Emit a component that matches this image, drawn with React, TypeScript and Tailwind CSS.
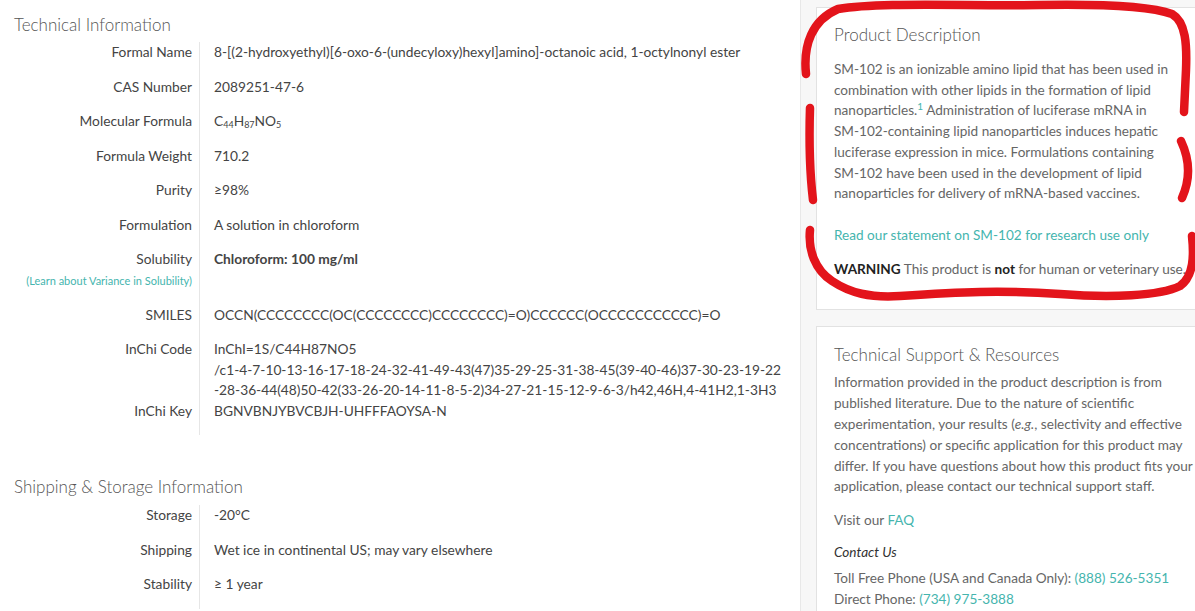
const teal = "text-[#45b5ae]";

const Row = ({
  label,
  children,
  extra,
  tight,
}: {
  label: string;
  children: React.ReactNode;
  extra?: React.ReactNode;
  tight?: boolean;
}) => (
  <div className="grid grid-cols-[199px_1fr]">
    <div className={`text-right pr-[7px] ${tight ? "" : "pb-[14px]"}`}>
      <div className="text-[#444]">{label}</div>
      {extra}
    </div>
    <div className={`border-l border-[#e6e6e6] pl-[14px] text-[#444] ${tight ? "" : "pb-[14px]"}`}>
      {children}
    </div>
  </div>
);

const TechnicalInfo = () => (
  <section>
    <h2 className="pl-[14px] pt-[13px] text-[17px] leading-[24px] font-light text-[#555]">
      Technical Information
    </h2>
    <div className="mt-[5px] text-[13.75px] leading-[20.5px]">
      <Row label="Formal Name">
        8-[(2-hydroxyethyl)[6-oxo-6-(undecyloxy)hexyl]amino]-octanoic acid, 1-octylnonyl ester
      </Row>
      <Row label="CAS Number">2089251-47-6</Row>
      <Row label="Molecular Formula">
        C<sub className="text-[9px]">44</sub>H<sub className="text-[9px]">87</sub>NO
        <sub className="text-[9px]">5</sub>
      </Row>
      <Row label="Formula Weight">710.2</Row>
      <Row label="Purity">≥98%</Row>
      <Row label="Formulation">A solution in chloroform</Row>
      <Row
        label="Solubility"
        extra={
          <div className={`text-[11px] leading-[21px] ${teal}`}>
            (Learn about Variance in Solubility)
          </div>
        }
      >
        <span className="font-bold">Chloroform: 100 mg/ml</span>
      </Row>
      <Row label="SMILES">
        OCCN(CCCCCCCC(OC(CCCCCCCC)CCCCCCCC)=O)CCCCCC(OCCCCCCCCCCC)=O
      </Row>
      <Row label="InChi Code" tight>
        <div className="whitespace-nowrap">InChI=1S/C44H87NO5</div>
        <div className="whitespace-nowrap">
          /c1-4-7-10-13-16-17-18-24-32-41-49-43(47)35-29-25-31-38-45(39-40-46)37-30-23-19-22
        </div>
        <div className="whitespace-nowrap">
          -28-36-44(48)50-42(33-26-20-14-11-8-5-2)34-27-21-15-12-9-6-3/h42,46H,4-41H2,1-3H3
        </div>
      </Row>
      <Row label="InChi Key">BGNVBNJYBVCBJH-UHFFFAOYSA-N</Row>
    </div>
  </section>
);

const ShippingInfo = () => (
  <section className="mt-[40px]">
    <h2 className="pl-[14px] text-[17px] leading-[24px] font-light text-[#555]">
      Shipping &amp; Storage Information
    </h2>
    <div className="mt-[6px] text-[13.75px] leading-[20.5px]">
      <Row label="Storage">-20°C</Row>
      <Row label="Shipping">Wet ice in continental US; may vary elsewhere</Row>
      <Row label="Stability">≥ 1 year</Row>
    </div>
  </section>
);

const Sidebar = () => (
  <aside className="w-[420px] shrink-0 bg-[#f7f7f7] border-l border-[#e8e8e8] pl-[15px] pt-[7px]">
    <div className="bg-white border border-[#e2e2e2] pl-[17px] pt-[15px] pb-[30px]">
      <h3 className="text-[17px] leading-[24px] font-light text-[#555]">Product Description</h3>
      <div className="w-[362px] mt-[12px] text-[13.6px] leading-[20.7px] text-[#666]">
        <p>
          <span className="whitespace-nowrap">SM-102</span> is an ionizable amino lipid that has
          been used in combination with other lipids in the formation of lipid nanoparticles.
          <sup className={`text-[10px] ${teal}`}>1</sup> Administration of luciferase mRNA in{" "}
          <span className="whitespace-nowrap">SM-102-containing</span> lipid nanoparticles
          induces hepatic luciferase expression in mice. Formulations containing{" "}
          <span className="whitespace-nowrap">SM-102</span> have been used in the development of
          lipid nanoparticles for delivery of mRNA-based vaccines.
        </p>
        <p className={`mt-[21px] ${teal}`}>Read our statement on SM-102 for research use only</p>
        <p className="mt-[13px] whitespace-nowrap">
          <span className="font-bold text-[#222]">WARNING</span> This product is{" "}
          <span className="font-bold text-[#222]">not</span> for human or veterinary use.
        </p>
      </div>
    </div>

    <div className="mt-[16px] bg-white border border-[#e2e2e2] pl-[17px] pt-[16px] pb-[30px]">
      <h3 className="text-[17px] leading-[24px] font-light text-[#555]">
        Technical Support &amp; Resources
      </h3>
      <div className="w-[365px] mt-[5px] text-[13.6px] leading-[20.8px] text-[#666]">
        <p>
          Information provided in the product description is from published literature. Due
          to the nature of scientific experimentation, your results (<i>e.g.</i>, selectivity
          and effective concentrations) or specific application for this product may differ.
          If you have questions about how this product fits your application, please contact
          our technical support staff.
        </p>
        <p className="mt-[13px]">
          Visit our <span className={teal}>FAQ</span>
        </p>
        <p className="mt-[11px] italic text-[#333]">Contact Us</p>
        <p className="mt-[5px]">
          Toll Free Phone (USA and Canada Only): <span className={teal}>(888) 526-5351</span>
        </p>
        <p>
          Direct Phone: <span className={teal}>(734) 975-3888</span>
        </p>
      </div>
    </div>
  </aside>
);

const Markup = () => (
  <svg
    className="absolute inset-0 pointer-events-none"
    width="1195"
    height="611"
    viewBox="0 0 1195 611"
    fill="none"
    stroke="#e3141b"
    strokeWidth="8.5"
    strokeLinecap="round"
    strokeLinejoin="round"
  >
    <path d="M806,74 C803,45 812,20 838,9 C880,2 960,6 1040,5 C1100,4 1150,6 1172,14 C1186,22 1187,45 1186,70 L1184,112" />
    <path d="M810,108 C809,140 810,175 813,200" />
    <path d="M1181,141 C1189,158 1191,178 1182,198" />
    <path d="M810,230 C808,250 815,270 832,281 C850,293 870,298 900,296 C960,292 1000,290 1060,294 C1110,298 1160,296 1180,286 C1194,276 1194,255 1192,236" />
  </svg>
);

export default function App() {
  return (
    <div
      className="relative w-[1195px] h-[611px] overflow-hidden bg-white"
      style={{ fontFamily: "Lato, 'Open Sans', sans-serif" }}
    >
      <div className="flex h-full">
        <main className="w-[800px] shrink-0">
          <TechnicalInfo />
          <ShippingInfo />
        </main>
        <Sidebar />
      </div>
      <Markup />
    </div>
  );
}
